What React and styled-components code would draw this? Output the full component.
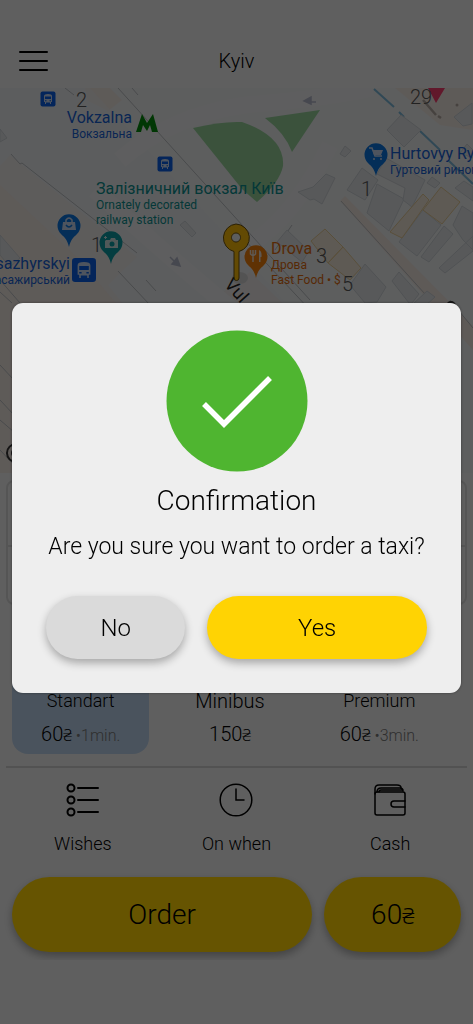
import styled, { createGlobalStyle } from 'styled-components'

const GlobalStyle = createGlobalStyle`
  * {
    box-sizing: border-box;
  }
  body {
    background-color: #eee;
    color: #000;
    font-family: Roboto, 'Noto Sans', sans-serif;
    font-weight: 300;
    margin: 0;
  }
  button {
    background: none;
    border: 0;
    color: inherit;
    cursor: pointer;
    font: inherit;
    padding: 0;
  }
  h1, h2, p {
    font-weight: 300;
    margin: 0;
  }
`

const Page = styled.main`
  display: flex;
  flex-direction: column;
  min-height: 100vh;
  padding-bottom: 64px;
`

const Header = styled.header`
  align-items: center;
  display: grid;
  grid-template-columns: 1fr auto 1fr;
  padding: 44px 18px 10px;
  h1 {
    font-size: 20px;
    line-height: 34px;
  }
`

const MenuButton = styled.button`
  display: flex;
  height: 34px;
  svg {
    height: 34px;
    width: 30px;
  }
`

const Map = styled.section`
  flex: 1;
  min-height: 385px;
  overflow: hidden;
  position: relative;
`

const MapDrawing = styled.svg`
  display: block;
  height: 100%;
  left: 0;
  position: absolute;
  top: 0;
  width: 100%;
`

const MapLabel = styled.div`
  color: ${({ $color }) => $color};
  font-size: 12px;
  font-weight: 400;
  left: ${({ $x }) => $x}px;
  line-height: 15px;
  position: absolute;
  text-align: ${({ $end }) => ($end ? 'right' : 'left')};
  top: ${({ $y }) => $y}px;
  transform: ${({ $end }) => ($end ? 'translateX(-100%)' : 'none')};
  white-space: nowrap;
  strong {
    display: block;
    font-size: 16px;
    font-weight: 400;
    line-height: 18px;
  }
`

const HouseNumber = styled.span`
  color: #555;
  font-size: 20px;
  left: ${({ $x }) => $x}px;
  line-height: 20px;
  position: absolute;
  top: ${({ $y }) => $y}px;
`

const StreetName = styled.span`
  color: #222;
  font-size: 18px;
  font-weight: 400;
  left: 228px;
  line-height: 20px;
  position: absolute;
  top: 183px;
  transform: rotate(48deg);
  transform-origin: 0 50%;
  white-space: nowrap;
`

const Sheet = styled.section`
  overflow: hidden;
  padding: 7px 6px 8px;
`

const AddressBox = styled.div`
  border: 2px solid #d4d4d4;
  border-radius: 8px;
  div {
    height: 63px;
  }
  div + div {
    border-top: 2px solid #d4d4d4;
    height: 58px;
  }
`

const Fares = styled.div`
  display: grid;
  gap: 12px;
  grid-template-columns: repeat(3, 1fr);
  padding: 15px 19px 12px 6px;
`

const Fare = styled.button`
  align-items: center;
  background-color: ${({ $active }) => ($active ? '#bad0e8' : 'transparent')};
  border-radius: 16px;
  display: flex;
  flex-direction: column;
  gap: 9px;
  height: 134px;
  justify-content: flex-end;
  line-height: 24px;
  padding-bottom: 8px;
  white-space: nowrap;
  .name {
    font-size: ${({ $large }) => ($large ? 20 : 18)}px;
  }
  .price {
    align-items: baseline;
    display: flex;
    font-size: 20px;
    gap: 4px;
    height: 24px;
  }
  .time {
    color: #777;
    font-size: 16px;
    line-height: 16px;
  }
`

// the hryvnia sign is set smaller than the digits
const Currency = styled.small`
  font-size: 80%;
  line-height: 1;
`

const Options = styled.div`
  border-top: 2px solid #ccc;
  display: grid;
  grid-template-columns: repeat(3, 1fr);
  padding: 15px 0 21px;
`

const Option = styled.button`
  align-items: center;
  display: flex;
  flex-direction: column;
  font-size: 18px;
  gap: 15px;
  line-height: 24px;
  svg {
    display: block;
    height: 34px;
    width: 34px;
  }
`

const Actions = styled.div`
  display: grid;
  gap: 12px;
  grid-template-columns: 301fr 137fr;
  padding: 0 6px;
`

const Pill = styled.button`
  background-color: ${({ $muted }) => ($muted ? '#dadada' : '#ffd303')};
  border-radius: 38px;
  box-shadow: 0 4px 8px rgba(0, 0, 0, 0.3);
  font-size: ${({ $big }) => ($big ? 28 : 24)}px;
  height: ${({ $big }) => ($big ? 75 : 63)}px;
`

const Backdrop = styled.div`
  align-items: center;
  background-color: rgba(0, 0, 0, 0.6);
  display: flex;
  inset: 0;
  justify-content: center;
  padding: 0 12px 28px;
  position: fixed;
`

const Dialog = styled.section`
  background-color: #eee;
  border-radius: 11px;
  box-shadow: 0 0 3px rgba(0, 0, 0, 0.4);
  padding: 27px 34px 34px;
  text-align: center;
  width: 100%;
  h2 {
    font-size: 28px;
    line-height: 36px;
    margin: 11px 0 12px;
  }
  p {
    font-size: 23px;
    line-height: 32px;
    margin: 0 -20px 33px;
  }
`

const CheckIcon = styled.svg`
  display: block;
  height: 142px;
  margin: 0 auto;
  width: 142px;
`

const DialogActions = styled.div`
  display: grid;
  gap: 22px;
  grid-template-columns: 139fr 219fr;
`

const Pin = ({ x, y, color, children }) => (
  <g transform={`translate(${x} ${y})`}>
    <path
      d='M0 22 C-2 14 -4 13 -8 9 A11.5 11.5 0 1 1 8 9 C4 13 2 14 0 22 Z'
      fill={color}
    />
    {children}
  </g>
)

const BusStop = ({ x, y, scale = 1 }) => (
  <g transform={`translate(${x} ${y}) scale(${scale})`}>
    <rect x='-7.5' y='-7.5' width='15' height='15' rx='2' fill='#0a5ee0' />
    <path
      d='M-4 -3 Q-4 -5 0 -5 Q4 -5 4 -3 V3 H3 V5 H2 V3.500 H-2 V5 H-3 V3 H-4 Z'
      fill='#c4d2ea'
    />
    <path d='M-3 -2.500 H3 V0 H-3 Z M-3 1.200 h1.500 v1 h-1.500 Z M1.500 1.200 h1.500 v1 h-1.500 Z' fill='#0a5ee0' />
  </g>
)

function MapPicture() {
  return (
    <MapDrawing viewBox='0 88 473 385' preserveAspectRatio='xMidYMin slice' aria-hidden='true'>
      <rect y='88' width='473' height='385' fill='#e8eaeb' />
      {/* railway land and squares */}
      <path d='M0 166 L10 155 L137 257 L108 285 L152 340 V473 H0 Z' fill='#ece3dd' />
      <path d='M85 88 H110 L122 100 L108 111 L88 101 Z M395 88 H473 V130 L440 125 Z' fill='#ece3dd' />
      <path d='M340 201 L345 196 L473 326 V350 L455 330 Z M223 292 L250 272 L290 310 H230 Z' fill='#eae0da' />
      <path d='M0 88 H90 L230 240 L300 320 H130 L80 260 L0 185 Z' fill='#e5e8ec' opacity='.5' />
      <path d='M120 160 Q170 116 245 105 Q330 98 372 88 M95 190 Q250 330 300 360 M330 145 Q290 225 240 250' fill='none' stroke='#ebeced' strokeWidth='17' />
      {/* park */}
      <path d='M193 128 Q222 121 242 122 Q285 137 283 166 Q280 182 257 202 L242 189 Z' fill='#93cd97' />
      <path d='M265 118 L320 110 L292 152 Q285 133 265 118 Z' fill='#93cd97' />
      {/* tracks and roads */}
      <g fill='none' stroke='#b6babd' strokeWidth='1'>
        <path d='M118 88 L310 300 M132 88 L138 95 M11 154 L20 164 L22 163 L137 253 M118 271 L150 305 M341 201 L425 294 M240 235 L310 310 M292 225 L275 250 M65 88 L74 95' />
        <path d='M0 280 L20 303 M0 292 L12 303 M0 365 L14 380 M0 400 L14 415 M0 420 L14 432 M0 450 L14 465 M146 280 L156 291 M450 300 L473 328' />
      </g>
      <path d='M374 89 L394 107 M399 112 L404 117 M420 131 L440 150 M449 161 L473 184' stroke='#79b4d4' strokeWidth='2' fill='none' />
      {/* buildings */}
      <g fill='#dcdfe2' stroke='#c8cdd1' strokeWidth='1'>
        <path d='M401 115 L421 130 L404 147 L387 130 Z' />
        <path d='M454 117 L472 103 V124 L463 126 Z M340 154 L345 146 L351 151 L345 157 Z' />
        <path d='M298 192 L313 187 L326 174 L335 178 L322 204 L314 199 L310 200 Z' />
        <path d='M347 190 L362 168 L378 180 L365 200 Z M367 213 L377 184 L404 199 L389 231 Z' />
        <path d='M377 174 L386 158 L425 180 L412 207 L403 200 L405 188 Z' />
        <path d='M399 242 L423 210 L441 225 L417 256 Z M421 257 L444 226 L453 234 L429 262 Z' />
        <path d='M453 225 L462 206 L473 213 V250 L463 240 Z M439 268 L473 236 V251 L445 273 Z' />
        <path d='M277 242 L287 230 L309 251 L302 262 Z M350 285 L365 264 L386 287 L377 302 L365 303 Z' />
        <path d='M392 281 L399 272 L419 294 L412 303 H409 Z M412 305 L427 291 L435 297 L425 306 Z' />
        <path d='M0 129 L7 138 L0 142 Z M180 225 L185 221 L196 233 L192 237 Z M0 235 L20 258 L10 267 L0 255 Z' />
        <path d='M460 153 L467 144 L473 150 V158 Z M455 188 L464 181 L473 187 V201 Z M427 183 L432 177 L440 183 L435 188 Z' />
      </g>
      <g fill='#ece0d2' stroke='#dec592' strokeWidth='1'>
        <path d='M441 187 L460 202 L442 224 L423 210 Z M390 232 L423 194 L429 200 L402 238 Z' />
        <path d='M311 241 L325 229 L343 247 L328 263 Z M328 263 L343 247 L361 268 L350 280 Z' />
      </g>
      <path d='M316 102 l-5 0 M304 101 l7 -4 v7 Z' stroke='#b0b3c6' strokeWidth='1.500' fill='#b0b3c6' />
      <path d='M170 257 l6 6 M180 266 l-8 -2 l5 -6 Z' stroke='#b0b3c6' strokeWidth='1.500' fill='#b0b3c6' />
      {/* metro and bus stops */}
      <path d='M136 132 L142 114 L147 123 L153 114 L158 132 H152 L150 125 L147 131 L143 125 L141 132 Z' fill='#04890b' />
      <BusStop x={48} y={99} />
      <BusStop x={165} y={164} />
      <BusStop x={84} y={270} scale={1.6} />
      {/* places */}
      <Pin x={69} y={225} color='#0c74dc'>
        <path d='M-6 -3 H6 L7 5 H-7 Z' fill='#c4d2ea' />
        <path d='M-3 -3 V-5 Q0 -9 3 -5 V-3' fill='none' stroke='#c4d2ea' strokeWidth='1.500' />
        <path d='M-3 0 Q0 4 3 0' fill='none' stroke='#0c74dc' strokeWidth='1.500' />
      </Pin>
      <Pin x={376} y={154} color='#0c74dc'>
        <path d='M-7 -6 h3 l3 8 h7 M-3 5 h2 M4 5 h2' fill='none' stroke='#c4d2ea' strokeWidth='1.500' />
        <path d='M-3.500 -4 H7 L5 1 H-2 Z' fill='#c4d2ea' />
      </Pin>
      <Pin x={111} y={242} color='#0c9aa0'>
        <path d='M-5 -2 H-1 L0 -4 H4 L5 -2 H7 V6 H-6 V-1 Z M-6 -6 h1 v1 h1 v1 h-1 v1 h-1 v-1 h-1 v-1 h1 Z' fill='#c8dede' />
        <circle cx='1' cy='2' r='2.500' fill='#0c9aa0' />
      </Pin>
      <Pin x={256} y={256} color='#ee7d0c'>
        <path d='M-5.500 -6 V-2 Q-3 1 -0.500 -2 V-6 M-3 -6 V6' fill='none' stroke='#eadccc' strokeWidth='1.500' />
        <path d='M3 6 V-6 Q6 -5 5.500 1 H4.500 V6 Z' fill='#eadccc' />
      </Pin>
      <path d='M428 88 H445 L436 103 Z' fill='#f33c6c' />
      <path d='M423 100 L436 115 M438 116 l3 2' stroke='#b0a69f' strokeWidth='2.500' />
      <circle cx='457' cy='105' r='1.500' fill='#b0a69f' />
      <circle cx='451' cy='306' r='4' fill='none' stroke='#333' strokeWidth='2' />
      <circle cx='16' cy='453' r='9' fill='none' stroke='#333' strokeWidth='2' />
      <circle cx='16' cy='453' r='4' fill='none' stroke='#333' strokeWidth='2' />
      {/* pickup point */}
      <ellipse cx='240' cy='278' rx='8' ry='6' fill='#d0d0d0' />
      <path
        d='M236 224 a14 14 0 0 1 3 27.500 V278 a2.500 2.500 0 0 1 -5 0 V251.500 A14 14 0 0 1 236 224 Z M236 233 a4.500 4.500 0 1 0 .01 0 Z'
        fill='#f8b908'
        stroke='#6a5010'
        fillRule='evenodd'
      />
    </MapDrawing>
  )
}

const houseNumbers = [
  { text: '2', x: 76, y: 2 },
  { text: '29', x: 410, y: -1 },
  { text: '1', x: 361, y: 91 },
  { text: '1', x: 91, y: 147 },
  { text: '3', x: 316, y: 158 },
  { text: '5', x: 342, y: 186 }
]

const fares = [
  { name: 'Standart', price: '60', time: '1min.', active: true },
  { name: 'Minibus', price: '150', large: true },
  { name: 'Premium', price: '60', time: '3min.' }
]

const options = [
  {
    label: 'Wishes',
    icon: (
      <g strokeWidth='2'>
        <circle cx='5' cy='5' r='3.500' />
        <circle cx='5' cy='17' r='3.500' />
        <circle cx='5' cy='29' r='3.500' />
        <path d='M12 5 H32 M12 17 H32 M12 29 H32' />
      </g>
    )
  },
  {
    label: 'On when',
    icon: (
      <g strokeWidth='1.500'>
        <circle cx='17' cy='17' r='15.800' />
        <path d='M17 6 V17 H25' />
      </g>
    )
  },
  {
    label: 'Cash',
    icon: (
      <g strokeWidth='1.500'>
        <rect x='2' y='9' width='30' height='23' rx='2' />
        <path d='M2 11 V6 Q2 2 6 2 H24 Q28 2 28 5' />
        <path d='M4 9 Q4 5 8 5 H27 Q30 5 30 8 M6 9 Q6 7 8 7 H30' />
        <path d='M32 18 H21 Q18 18 18 21 Q18 24 21 24 H32' />
      </g>
    )
  }
]

export default function App() {
  return (
    <>
      <GlobalStyle />
      <Page>
        <Header>
          <MenuButton aria-label='Menu'>
            <svg viewBox='0 0 30 34' stroke='#000' strokeWidth='2' strokeLinecap='round'>
              <path d='M2 8 H29 M2 17 H29 M2 26 H29' />
            </svg>
          </MenuButton>
          <h1>Kyiv</h1>
        </Header>

        <Map>
          <MapPicture />
          {houseNumbers.map(({ text, x, y }) => (
            <HouseNumber key={`${x}-${y}`} $x={x} $y={y}>
              {text}
            </HouseNumber>
          ))}
          <MapLabel $color='#175fd0' $x={132} $y={21} $end>
            <strong>Vokzalna</strong>
            Вокзальна
          </MapLabel>
          <MapLabel $color='#0c8c8c' $x={96} $y={92}>
            <strong>Залізничний вокзал Київ</strong>
            Ornately decorated
            <br />
            railway station
          </MapLabel>
          <MapLabel $color='#175fd0' $x={70} $y={167} $end>
            <strong>Pasazhyrskyi</strong>
            Пасажирський
          </MapLabel>
          <MapLabel $color='#175fd0' $x={390} $y={57}>
            <strong>Hurtovyy Rynok</strong>
            Гуртовий ринок
          </MapLabel>
          <MapLabel $color='#d9680c' $x={271} $y={152}>
            <strong>Drova</strong>
            Дрова
            <br />
            Fast Food • $
          </MapLabel>
          <StreetName>Vul</StreetName>
        </Map>

        <Sheet>
          <AddressBox>
            <div />
            <div />
          </AddressBox>

          <Fares>
            {fares.map(({ name, price, time, active, large }) => (
              <Fare key={name} $active={active} $large={large}>
                <span className='name'>{name}</span>
                <span className='price'>
                  <span>
                    {price}
                    <Currency>₴</Currency>
                  </span>
                  {time && <span className='time'>•{time}</span>}
                </span>
              </Fare>
            ))}
          </Fares>

          <Options>
            {options.map(({ label, icon }) => (
              <Option key={label}>
                <svg viewBox='0 0 34 34' fill='none' stroke='#000' strokeLinecap='round'>
                  {icon}
                </svg>
                {label}
              </Option>
            ))}
          </Options>

          <Actions>
            <Pill $big>Order</Pill>
            <Pill $big>
              60<Currency>₴</Currency>
            </Pill>
          </Actions>
        </Sheet>
      </Page>

      <Backdrop>
        <Dialog role='dialog' aria-modal='true' aria-labelledby='dialog-title'>
          <CheckIcon viewBox='0 0 142 142' aria-hidden='true'>
            <circle cx='71' cy='71' r='70.500' fill='#4fb530' />
            <path d='M38 74 L58 94 L104 48' fill='none' stroke='#fff' strokeWidth='5.500' />
          </CheckIcon>
          <h2 id='dialog-title'>Confirmation</h2>
          <p>Are you sure you want to order a taxi?</p>
          <DialogActions>
            <Pill $muted>No</Pill>
            <Pill>Yes</Pill>
          </DialogActions>
        </Dialog>
      </Backdrop>
    </>
  )
}
